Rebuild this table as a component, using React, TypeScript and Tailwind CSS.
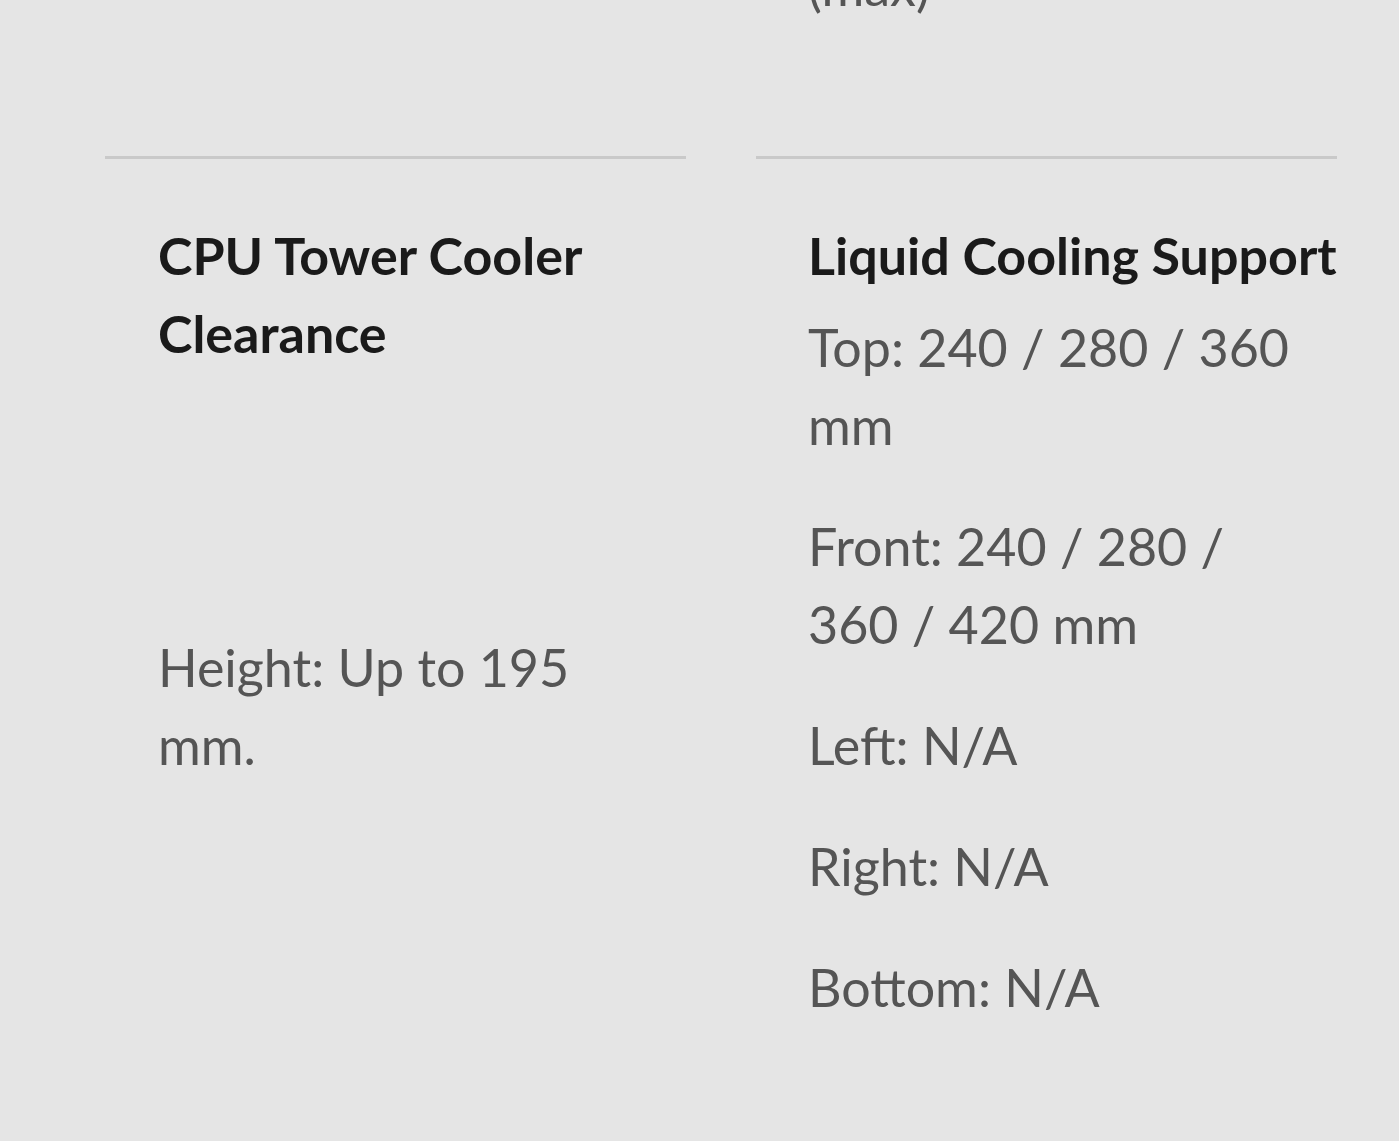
export default function App() {
  return (
    <div className="min-h-[1141px] w-full overflow-hidden bg-[#e5e5e5] font-['Lato',_'Liberation_Sans',_sans-serif]">
      <div className="grid grid-cols-2 gap-x-[70px] pl-[105px] pr-[62px]">
        {/* previous row, cut off at top */}
        <div />
        <div className="-mt-[53px] pl-[52px] pb-[131px]">
          <p className="text-[52px] leading-[78px] text-[#555555]">(max)</p>
        </div>

        {/* CPU Tower Cooler */}
        <div className="border-t-[3px] border-[#c9c9c9] pl-[53px] pt-[57px]">
          <h3 className="text-[52px] font-bold leading-[78px] text-[#1a1a1a]">
            CPU Tower Cooler Clearance
          </h3>
          <p className="mt-[256px] max-w-[440px] text-[52px] leading-[78px] text-[#555555]">
            Height: Up to 195 mm.
          </p>
        </div>

        {/* Liquid Cooling */}
        <div className="border-t-[3px] border-[#c9c9c9] pl-[52px] pt-[57px]">
          <h3 className="whitespace-nowrap text-[52px] font-bold leading-[78px] text-[#1a1a1a]">
            Liquid Cooling Support
          </h3>
          <div className="mt-[14px] flex max-w-[500px] flex-col gap-[43px] text-[52px] leading-[78px] text-[#555555]">
            <p>Top: 240 / 280 / 360 mm</p>
            <p>Front: 240 / 280 / 360 / 420 mm</p>
            <p>Left: N/A</p>
            <p>Right: N/A</p>
            <p>Bottom: N/A</p>
          </div>
        </div>
      </div>
    </div>
  );
}
